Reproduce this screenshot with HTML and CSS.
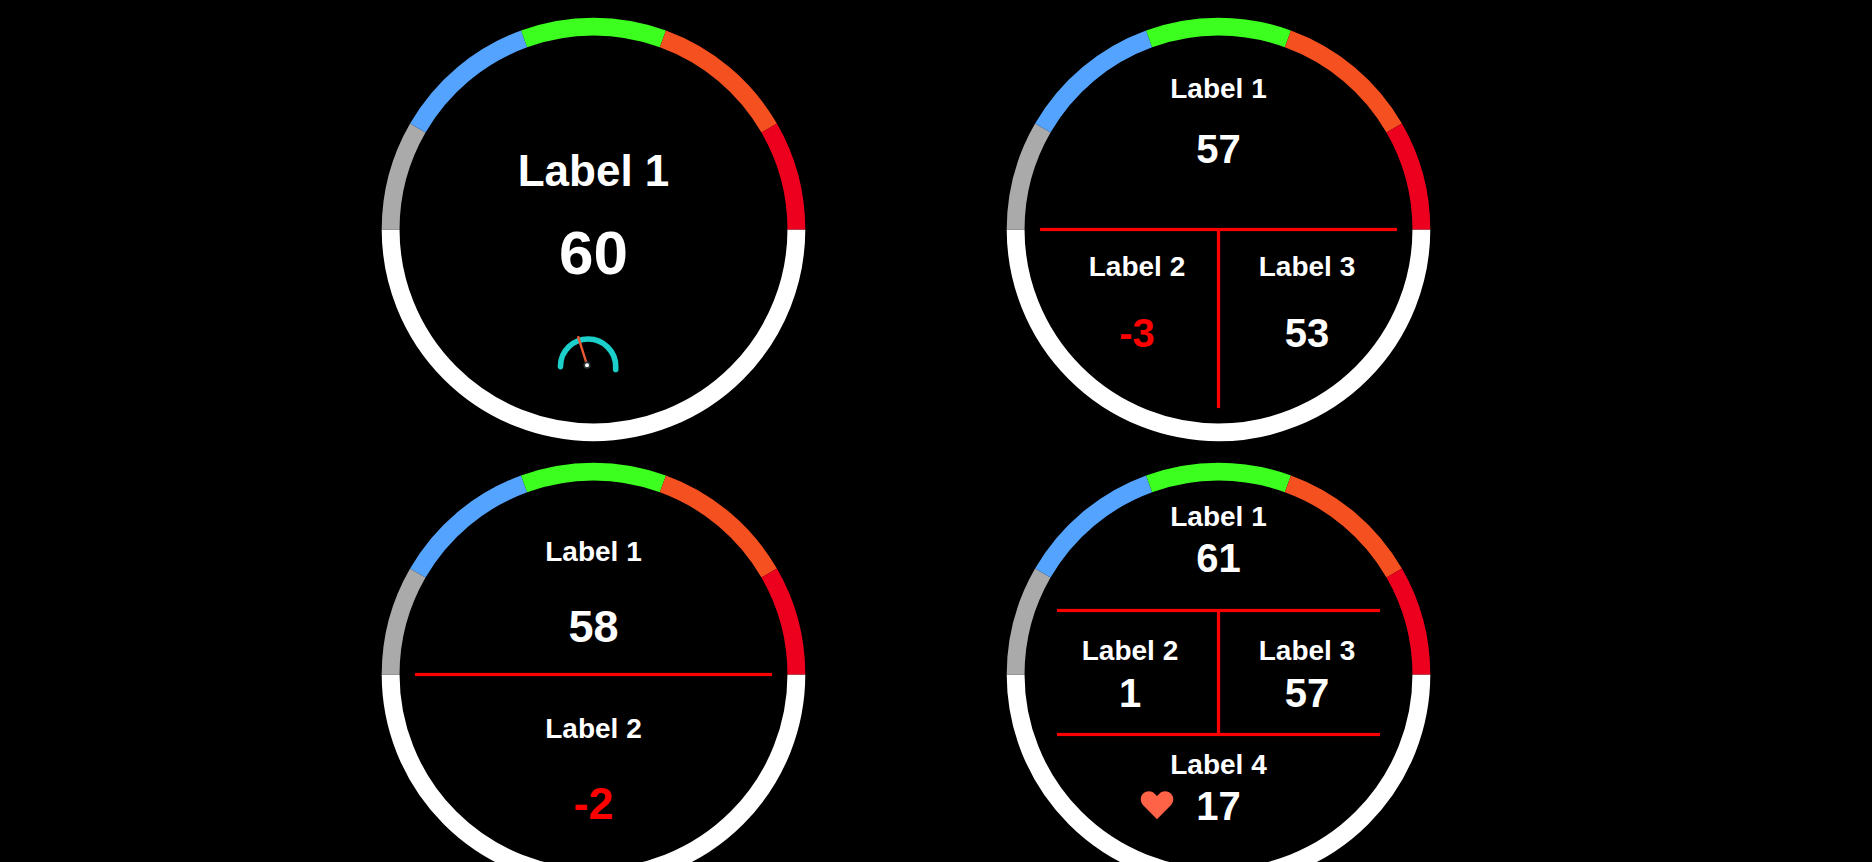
FILE: index.html
```html
<!DOCTYPE html>
<html lang="en">
<head>
<meta charset="utf-8">
<meta name="viewport" content="width=device-width, initial-scale=1">
<title>Gauges</title>
<link rel="stylesheet" href="styles.css">
</head>
<body>
<svg class="defs" aria-hidden="true">
  <symbol id="ring" viewBox="-212 -212 424 424">
    <g fill="none" stroke-width="17.8">
      <path stroke="#fff" d="M-202.4 0A202.4 202.4 0 0 0 202.4 0"/>
      <path stroke="#aaa" d="M-202.4 0A202.4 202.4 0 0 1 -175.28 -101.2"/>
      <path stroke="#54a4ff" d="M-175.28 -101.2A202.4 202.4 0 0 1 -69.22 -190.19"/>
      <path stroke="#3cff20" d="M-69.22 -190.19A202.4 202.4 0 0 1 69.22 -190.19"/>
      <path stroke="#f55020" d="M69.22 -190.19A202.4 202.4 0 0 1 175.28 -101.2"/>
      <path stroke="#ed001d" d="M175.28 -101.2A202.4 202.4 0 0 1 202.4 0"/>
    </g>
  </symbol>
</svg>
<main class="dashboard">
  <section class="gauge">
    <svg class="ring" aria-hidden="true"><use href="#ring"/></svg>
    <div class="face face-single">
      <div class="label">Label 1</div>
      <div class="value">60</div>
      <svg class="meter" viewBox="0 0 75 40" aria-hidden="true">
        <path d="M4.5 31.6V31A27.6 27.2 0 0 1 59.7 31.5V34.4" fill="none" stroke="#1bcfcb" stroke-width="5.6" stroke-linecap="round"/>
        <path d="M22 1.2L30.4 28" stroke="#eb5933" stroke-width="2.4"/>
        <circle cx="31" cy="30.2" r="2.8" fill="#fff" stroke="#2c3333" stroke-width="1.6"/>
      </svg>
    </div>
  </section>

  <section class="gauge">
    <svg class="ring" aria-hidden="true"><use href="#ring"/></svg>
    <div class="face face-triple">
      <div class="label">Label 1</div>
      <div class="value">57</div>
      <div class="rule"></div>
      <div class="split">
        <div class="cell">
          <div class="label">Label 2</div>
          <div class="value negative">-3</div>
        </div>
        <div class="divider"></div>
        <div class="cell">
          <div class="label">Label 3</div>
          <div class="value">53</div>
        </div>
      </div>
    </div>
  </section>

  <section class="gauge">
    <svg class="ring" aria-hidden="true"><use href="#ring"/></svg>
    <div class="face face-double">
      <div class="label">Label 1</div>
      <div class="value">58</div>
      <div class="rule"></div>
      <div class="label">Label 2</div>
      <div class="value negative">-2</div>
    </div>
  </section>

  <section class="gauge">
    <svg class="ring" aria-hidden="true"><use href="#ring"/></svg>
    <div class="face face-quad">
      <div class="label">Label 1</div>
      <div class="value">61</div>
      <div class="rule"></div>
      <div class="split">
        <div class="cell">
          <div class="label">Label 2</div>
          <div class="value">1</div>
        </div>
        <div class="divider"></div>
        <div class="cell">
          <div class="label">Label 3</div>
          <div class="value">57</div>
        </div>
      </div>
      <div class="rule"></div>
      <div class="label last">Label 4</div>
      <div class="reading">
        <svg class="heart" viewBox="0 0 34 30" aria-hidden="true">
          <path fill="#ff6347" d="M17 29.2L3.4 15.6C-.4 11.7 .2 6.2 3.2 3.5C6.8 .4 11.6 .8 14.6 3.7L17 6.1L19.4 3.7C22.4 .8 27.2 .4 30.8 3.5C33.8 6.2 34.4 11.7 30.6 15.6Z"/>
        </svg>
        <div class="value">17</div>
      </div>
    </div>
  </section>
</main>
</body>
</html>
```
FILE: styles.css
```css
body {
  margin: 0;
  background: #000;
  color: #fff;
  font-family: "Liberation Sans", Arial, sans-serif;
  font-weight: bold;
}

.defs {
  display: none;
}

.dashboard {
  display: grid;
  grid-template-columns: repeat(2, 425px);
  justify-content: center;
  gap: 20px 200px;
  padding: 17px 60px 17px 0;
}

.gauge {
  display: grid;
}

.ring,
.face {
  grid-area: 1 / 1;
}

.ring {
  width: 100%;
  aspect-ratio: 1;
}

.face {
  display: flex;
  flex-direction: column;
  align-items: center;
}

.label {
  font-size: 28px;
  line-height: 32px;
}

.value {
  font-size: 40px;
  line-height: 44px;
}

.negative {
  color: #f00;
}

.rule {
  width: 357px;
  height: 3px;
  border-radius: 1px;
  background: #f00;
  box-shadow: 0 0 1px #f00;
}

.split {
  display: grid;
  grid-template-columns: 1fr 3px 1fr;
  width: 357px;
}

.cell {
  display: flex;
  flex-direction: column;
  align-items: center;
}

.cell:last-child {
  padding-right: 3px;
}

.divider {
  background: #f00;
  box-shadow: 0 0 1px #f00;
}

.face-single {
  padding-top: 129px;
}

.face-single .label {
  font-size: 44px;
  line-height: 50px;
}

.face-single .value {
  margin-top: 23px;
  font-size: 62px;
  line-height: 68px;
}

.meter {
  width: 75px;
  height: 40px;
  margin-top: 48px;
}

.face-triple {
  padding-top: 56px;
}

.face-triple > .value {
  margin-top: 22px;
}

.face-triple .rule {
  margin-top: 57px;
}

.face-triple .split {
  height: 177px;
}

.face-triple .cell {
  padding-top: 20px;
  gap: 28px;
}

.face-triple .cell:first-child {
  padding-left: 17px;
}

.face-double {
  padding-top: 74px;
}

.face-double .value {
  margin-top: 34px;
  font-size: 45px;
  line-height: 50px;
}

.face-double .rule {
  margin: 21px 0 37px;
}

.face-quad {
  padding-top: 39px;
}

.face-quad > .value {
  margin: 3px 0 29px;
}

.face-quad .rule {
  width: 323px;
}

.face-quad .cell {
  padding-top: 23px;
  padding-bottom: 18px;
  gap: 4px;
}

.face-quad .cell:first-child {
  padding-left: 3px;
}

.last {
  margin-top: 13px;
}

.reading {
  display: grid;
  grid-template-columns: 1fr auto 1fr;
  column-gap: 22px;
  align-self: stretch;
  margin-top: 3px;
}

.heart {
  justify-self: end;
  width: 34px;
  height: 30px;
  margin-top: 6px;
}

@media (max-width: 1110px) {
  .dashboard {
    grid-template-columns: 425px;
    padding-right: 0;
  }
}
```
